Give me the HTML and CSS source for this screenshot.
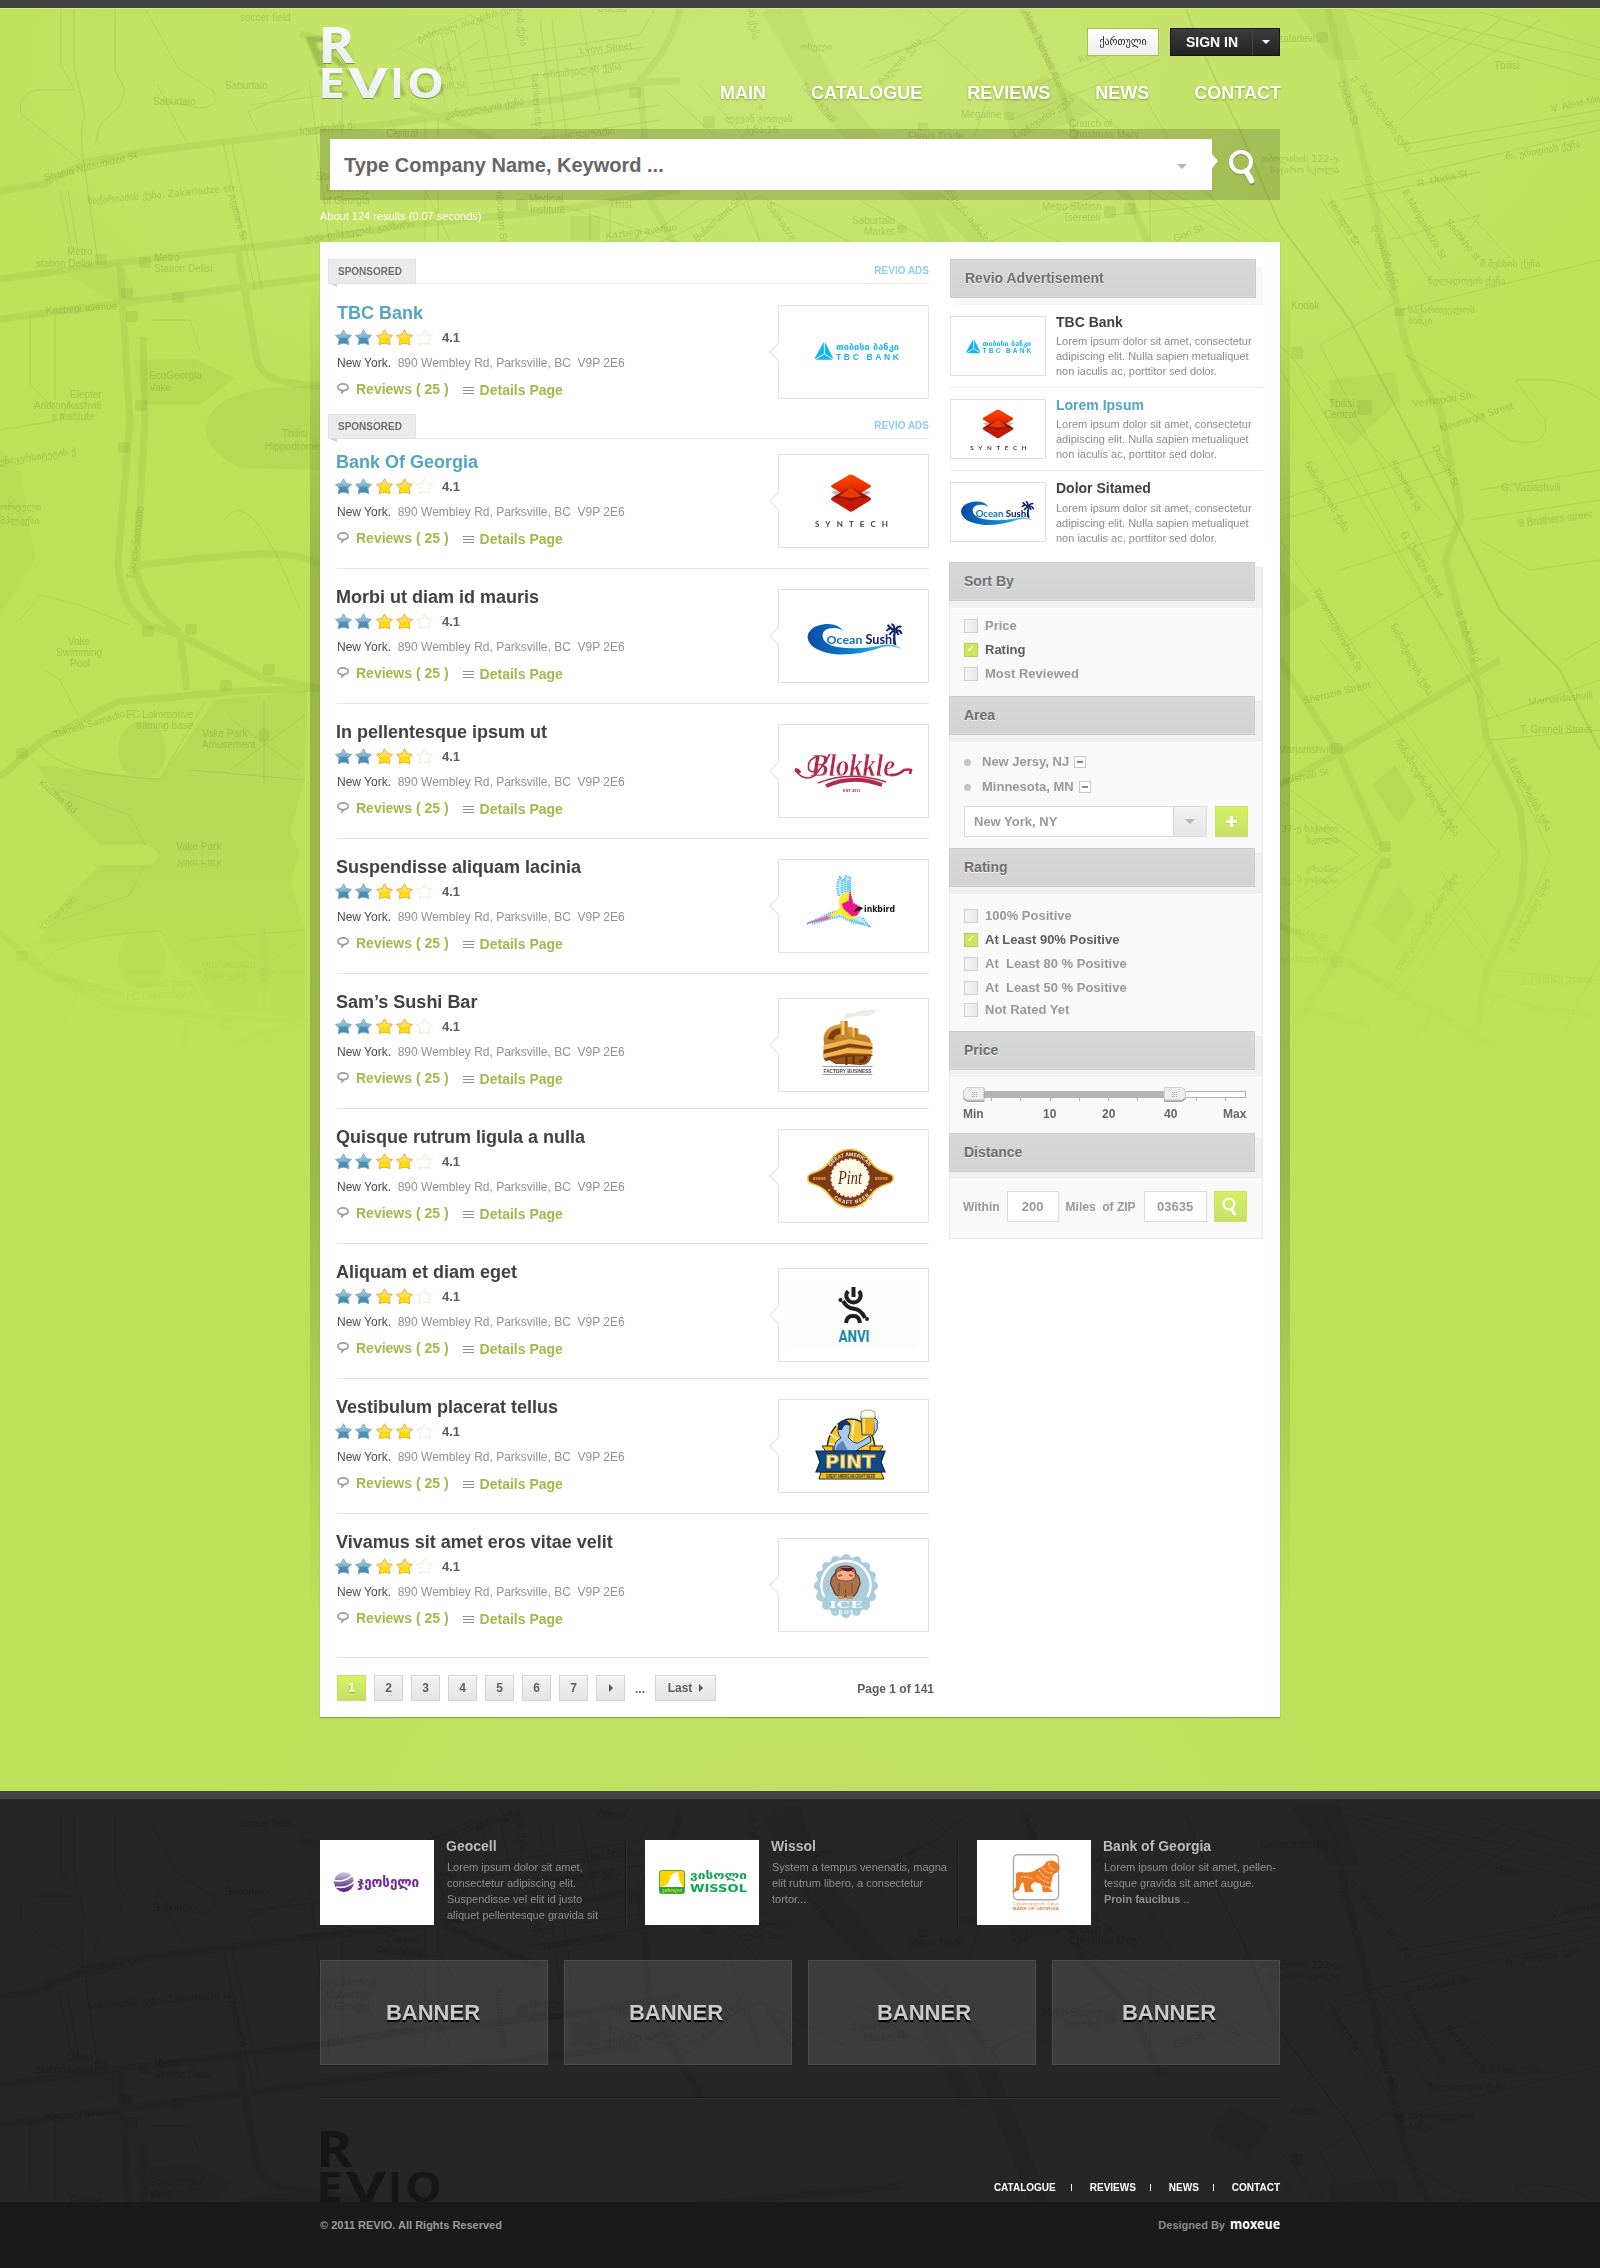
FILE: index.html
```html
<!DOCTYPE html>
<html lang="en">
<head>
<meta charset="utf-8">
<title>Revio</title>
<link rel="stylesheet" href="styles.css">
</head>
<body>
<svg class="defs" width="0" height="0" aria-hidden="true">
  <defs>
    <linearGradient id="gBlue" x1="0" y1="0" x2="0" y2="1"><stop offset="0" stop-color="#b9d3e2"/><stop offset=".5" stop-color="#7fb0cb"/><stop offset=".55" stop-color="#4c8fb5"/><stop offset="1" stop-color="#4488ad"/></linearGradient>
    <linearGradient id="gGold" x1="0" y1="0" x2="0" y2="1"><stop offset="0" stop-color="#ffe873"/><stop offset=".5" stop-color="#ffe14e"/><stop offset=".6" stop-color="#ffd800"/><stop offset="1" stop-color="#fff200"/></linearGradient>
    <linearGradient id="gLogo" x1="0" y1="0" x2="0" y2="1"><stop offset="0" stop-color="#ffffff"/><stop offset="1" stop-color="#e3e9ef"/></linearGradient>
    <linearGradient id="gRed" x1="0" y1="0" x2="0" y2="1"><stop offset="0" stop-color="#ff4a00"/><stop offset="1" stop-color="#d81500"/></linearGradient>
    <linearGradient id="gWave" x1="0" y1="0" x2="1" y2="0"><stop offset="0" stop-color="#0b4aa8"/><stop offset=".5" stop-color="#0a86cc"/><stop offset="1" stop-color="#5cc8ef"/></linearGradient>
    <linearGradient id="gFactory" x1="0" y1="0" x2="0" y2="1"><stop offset="0" stop-color="#e9a93c"/><stop offset="1" stop-color="#8a4a10"/></linearGradient>
    <linearGradient id="gGlobe" x1="0" y1="0" x2="0" y2="1"><stop offset="0" stop-color="#d8cfe0"/><stop offset=".45" stop-color="#8f72a8"/><stop offset="1" stop-color="#4b1b72"/></linearGradient>
    <linearGradient id="gFade" x1="0" y1="0" x2="0" y2="1"><stop offset="0" stop-color="#fff" stop-opacity=".85"/><stop offset="1" stop-color="#fff" stop-opacity="0"/></linearGradient>
    <mask id="mirrorFade" maskUnits="userSpaceOnUse" x="0" y="855" width="1600" height="240"><rect x="0" y="855" width="1600" height="200" fill="url(#gFade)"/></mask>
    <clipPath id="mapClip"><rect x="0" y="0" width="1600" height="855"/></clipPath>
    <clipPath id="mirrorClip"><rect x="0" y="620" width="1600" height="235"/></clipPath>

    <path id="starShape" d="M8.5 .8 L11 5.6 L16.4 6.4 L12.8 10 L13.8 15.8 Q11 14.2 8.5 14.2 Q6 14.2 3.2 15.8 L4.2 10 L.6 6.4 L6 5.6 Z" stroke-linejoin="round"/>
    <symbol id="stars" overflow="visible">
      <use href="#starShape" fill="url(#gBlue)" stroke="#79a9c5"/>
      <use href="#starShape" x="20" fill="url(#gBlue)" stroke="#79a9c5"/>
      <use href="#starShape" x="41" fill="url(#gGold)" stroke="#f0a838"/>
      <use href="#starShape" x="61" fill="url(#gGold)" stroke="#f0a838"/>
      <use href="#starShape" x="81" fill="#fdfdfb" stroke="#e6e4de" stroke-dasharray="2 .6"/>
    </symbol>
    <symbol id="bubble" overflow="visible"><path d="M6 .9C3 .9 .9 2.300 .9 4.200S2.800 7.400 5.400 7.500L5 9.600L7.400 7.400C9.600 7.100 11.200 5.800 11.200 4.200C11.200 2.300 9 .9 6 .9Z" fill="none" stroke="#9b9b9b" stroke-width="1.600"/></symbol>
    <symbol id="lines" overflow="visible"><path d="M0 .5H11M0 3.500H11M0 6.500H11" stroke="#8f8f8f" fill="none"/></symbol>

    <g id="map" clip-path="url(#mapClip)" fill="none" stroke="currentColor">
      <g stroke-width="7" opacity=".07" stroke-linejoin="round">
        <path d="M0 191L43 184L87 162L150 151L320 130L380 125L470 112L560 99L650 82L680 81"/>
        <path d="M0 279L117 263L320 239L400 226L560 210L680 190"/>
        <path d="M0 319L213 291L320 277L640 240"/>
        <path d="M120 263L130 421L118 561Q120 610 150 626L180 635L260 677L320 688L960 700"/>
        <path d="M237 246L257 360Q262 384 320 386L470 420L900 380"/>
        <path d="M0 777L43 740L117 702L240 691L320 688"/>
        <path d="M180 635L187 690M143 337L145 420L136 570Q145 610 180 632"/>
        <path d="M134 566Q180 560 240 555T320 565"/>
        <path d="M300 34L345 45Q352 55 350 65M410 106L450 122L540 160"/>
        <path d="M680 8Q670 50 640 80L650 200L700 290"/>
        <path d="M1022 8L1058 80L1080 150L1130 200L1160 270"/>
        <path d="M1328 8L1380 230L1400 320Q1410 370 1440 410L1461 517L1445 560L1475 670L1487 740L1520 810L1525 855"/>
        <path d="M1280 660L1340 755L1380 845M1280 785L1340 752L1500 660"/>
      </g>
      <g stroke-width="18" opacity=".05"><path d="M790 0Q810 80 880 150L970 230Q1000 290 1040 400L1120 560L1260 640"/><path d="M770 8L830 110L920 200L970 300"/></g>
      <g stroke="none" fill="currentColor" opacity=".065">
        <path d="M270 388L330 384V470L240 468Q204 450 206 425Q212 395 270 388Z"/>
        <path d="M37 765L160 779L215 700L307 691L305 779L290 830L300 855H160L150 845H100L65 810Z"/>
        <ellipse cx="142" cy="750" rx="24" ry="29"/><path d="M70 275L120 262L140 300H110Z" opacity=".4"/>
        <path d="M1000 96L1045 76L1100 110L1050 130H1010ZM1290 0H1340L1360 60H1330Z"/>
        <path d="M1330 380L1395 372L1400 400L1372 425L1350 447L1330 425ZM1372 785L1395 765L1416 800L1398 824ZM1280 570L1310 600L1285 617Z"/>
        <path d="M133 360L195 359L235 378L200 405L145 405Z" opacity=".8"/><path d="M0 450L20 470L35 560L0 615Z" opacity=".6"/>
        <path d="M570 216H600V240H570ZM1230 300L1270 320L1250 350L1210 330Z"/>
      </g>
      <g stroke-width="1" opacity=".12">
        <path d="M61 8V65L75 90H38Q15 95 22 115L80 160M74 8V65L85 115Q80 125 82 150L98 263M115 8V70L125 90L120 105L100 125L95 145"/>
        <path d="M145 8L178 68L212 90Q222 106 200 108L160 100M157 84L185 140M223 143L255 290M232 143L262 290M60 190L72 250M68 190L78 250"/>
        <path d="M250 105L320 96M258 132L248 112L300 90M152 320H190L200 350M30 315V385L65 420M55 315V400M0 430L60 420L70 400"/>
        <path d="M20 620L40 595L80 605L130 625M45 670L60 680L78 715M225 520Q250 480 300 610"/>
        <path d="M40 745Q60 775 160 779L205 702M60 790L130 815L145 845M190 770L305 780M264 700V784M230 718L300 770M305 715L230 770"/>
        <path d="M395 50L470 15L500 30M400 48L440 68L480 40M430 40L445 100M442 36L457 98M454 30L469 95M480 14L495 90M500 12L515 88M540 20L560 180M552 20L572 180M580 12L600 110"/>
        <path d="M470 60L640 35M475 72L645 47M480 84L650 58M465 96L540 85M530 125L660 105M530 140L660 120M390 120L450 240M400 150H440L460 180"/>
        <path d="M640 35L655 8M665 90L730 150L760 240M700 85L780 180M310 85L330 250M342 100V240M425 118V240M438 118V240"/>
        <path d="M560 205L700 250M590 210V242M610 208V242M720 150L760 242M640 242L700 200M660 242L760 196L850 242"/>
        <path d="M925 8L945 25L970 8M930 40L950 22M870 60L935 40L990 90L960 180M860 70L945 30M1000 100L1150 40M1010 120L1160 60M1060 130L1240 230M1080 100L1270 242M1100 60L1130 100"/>
        <path d="M1130 70L1180 160L1240 230M990 242L1130 180L1240 242M1110 215L1215 205M1150 242V180M1010 218L1060 242M860 200L930 242"/>
        <path d="M1186 8Q1200 50 1240 130L1280 225L1350 320L1460 530L1500 610L1560 670L1600 750" stroke-width="2"/>
        <path d="M1345 8L1600 80M1350 8L1440 80L1400 120M1370 8L1600 60M1380 60L1440 30M1395 75L1470 25M1410 90L1500 20M1425 100L1540 20M1400 145L1600 110M1405 155L1600 120M1480 12L1600 48"/>
        <path d="M1345 190L1600 130M1342 200L1480 172M1320 198L1380 290M1330 198L1395 300M1360 180L1430 280M1370 175L1440 270M1420 160L1510 258M1390 240L1480 215L1470 228M1400 310L1600 260M1320 345L1400 300"/>
        <path d="M1405 355L1480 400M1440 390L1510 440Q1550 450 1545 420L1515 380Q1570 375 1600 400M1480 490L1600 470M1470 520L1600 500M1480 540L1530 570L1600 560"/>
        <path d="M1280 345L1440 520M1280 370L1500 720M1295 360L1480 700M1320 345L1430 560M1280 500L1440 450M1280 520L1450 470M1340 570L1450 535M1350 640L1440 585M1280 540L1460 800M1320 640L1500 855"/>
        <path d="M1485 720L1600 680M1490 740L1600 730M1430 820L1485 750M1440 840L1495 755M1500 745L1540 830L1550 855M1280 800L1360 855M1290 790L1380 855M1565 660L1600 640"/>
      </g>
      <g stroke="none" fill="currentColor" class="map-labels">
        <g opacity=".22">
          <text x="225" y="89">Saburtalo</text><text x="153" y="105">Saburtalo</text><text x="240" y="21">soccer field</text>
          <text transform="translate(45 181) rotate(-14)">Shalva Nutsubidze St</text><text transform="translate(88 204) rotate(-5)" class="ka">ზაქარიაძის ქუჩა. Zakariadze str.</text>
          <text transform="translate(228 195) rotate(74)">Asatiani St</text><text x="67" y="255">Metro</text><text x="36" y="267">station Delisi</text><text x="154" y="261">Metro</text><text x="154" y="272">Station Delisi</text>
          <text transform="translate(46 314) rotate(-4)">Kazbegi avenue</text><text x="149" y="379">EcoGeorgia</text><text x="149" y="391">Vake</text>
          <text x="70" y="398">Elepter</text><text x="34" y="409">Andronikashvili</text><text x="52" y="420">s Institute</text><text x="282" y="437">Tbilisi</text><text x="265" y="450">Hippodrome</text>
          <text transform="translate(134 580) rotate(-82)">Tskneti-Samadlo</text><text x="68" y="645">Vake</text><text x="56" y="656">Swimming</text><text x="70" y="667">Pool</text>
          <text transform="translate(55 738) rotate(-17)">Tskneti-Samadlo</text><text x="126" y="718">FC Lokomotive</text><text x="136" y="729">training base</text><text x="202" y="737">Vake Park</text><text x="202" y="748">Amusement</text>
          <text transform="translate(38 784) rotate(40)">Kustba Rd</text><text x="176" y="850">Vake Park</text><text x="0" y="510" class="ka">ორტული</text><text x="0" y="524" class="ka">მპლექსი</text><text transform="translate(0 465) rotate(-8)" class="ka">უნივერსიტეტის ქ</text>
          <text transform="translate(418 42) rotate(-18)" class="ka">გაბრიელ ისაკაძის ქუჩა</text><text transform="translate(580 54) rotate(-6)">Lvovi Street</text><text x="597" y="12">Odesa</text>
          <text transform="translate(543 79) rotate(-7)" class="ka">ონიაშვილის ქუჩა</text><text transform="translate(405 78) rotate(-8)" class="ka">ვილის ქუჩა</text><text transform="translate(408 93) rotate(-5)">Grand mill St</text>
          <text transform="translate(531 72) rotate(85)">Tashkenti str.</text><text transform="translate(446 118) rotate(-10)" class="ka">კანდელაკის ქუჩა</text><text transform="translate(300 134) rotate(-7)" class="ka">ნუცუბიძის ქ.</text>
          <text x="386" y="137">Central</text><text x="376" y="149">Republican</text><text transform="translate(542 144) rotate(-8)">Tskneti-Samadlo</text><text x="316" y="180">State Medical</text><text x="326" y="192">University</text><text x="323" y="204">of Georgia</text>
          <text x="529" y="202">Medical</text><text x="530" y="213">Institute</text><text transform="translate(495 182) rotate(85)">Ambrolauri St</text><text transform="translate(305 242) rotate(-8)" class="ka">ვაჟა-ფშაველას გამზირი</text><text x="609" y="208">Tfilisi</text>
          <text transform="translate(606 239) rotate(-7)">Kazbegi avenue</text><text x="725" y="122" class="ka">ლევან გოთუას</text><text x="744" y="133" class="ka">ქუჩა 16</text><text transform="translate(516 8) rotate(83)" class="ka">ტის ქუჩა</text><text transform="translate(748 8) rotate(82)" class="ka">ის ქუჩა</text>
          <text transform="translate(697 242) rotate(-42)">Bulachauri St</text><text transform="translate(766 205) rotate(55)">Saakadze</text>
          <text x="800" y="50" class="ka">ოსელი</text><text transform="translate(882 86) rotate(-48)" class="ka">რაულის ქუჩა</text><text transform="translate(1023 12) rotate(66)">Akaki Tsereteli Ave</text><text transform="translate(800 85) rotate(50)">Tsiteli Khidi</text>
          <text x="961" y="118">Megaline</text><text x="1069" y="127">Church of</text><text x="1069" y="138">Christmas Mary</text><text x="908" y="140">Eliava Trade</text><text transform="translate(1015 140) rotate(-33)" class="ka">ჭავჭავაძის ქუჩა</text>
          <text x="1042" y="210">Metro Station</text><text x="1063" y="221">Tsereteli</text><text x="852" y="224">Saburtalo</text><text x="864" y="235">Market</text><text transform="translate(940 185) rotate(52)" class="ka">მარჯვენა სანაპირო</text><text transform="translate(1175 242) rotate(-22)">Gori St</text><text transform="translate(1080 63) rotate(-22)">Kedia</text>
          <text x="1261" y="162" class="ka">თბილისის 122-ე</text><text x="1270" y="173" class="ka">საჯარო სკოლა</text><text x="1260" y="42">Nadzaladevi</text>
          <text transform="translate(1338 82) rotate(72)">Dadiani St</text><text transform="translate(1352 78) rotate(54)" class="ka">ე. მანჯგალაძის ქუჩა</text><text x="1494" y="69">Tbilisi</text><text transform="translate(1552 112) rotate(-12)">V. Alexi-Meskhi</text>
          <text transform="translate(1506 160) rotate(-10)" class="ka">რ. ურიდიას ქუჩა</text><text transform="translate(1418 187) rotate(-12)">R. Uridia St</text><text transform="translate(1328 203) rotate(58)">Rkinigza St</text><text transform="translate(1402 192) rotate(60)">E Manjgaladze St</text><text transform="translate(1445 222) rotate(52)">Sachkho st</text>
          <text transform="translate(1372 226) rotate(72)" class="ka">დადიანის ქუჩა</text><text x="1480" y="267" class="ka">მ.მესხის ქუჩა</text><text x="1428" y="284" class="ka">ნულადოვის ქუჩა</text><text x="1291" y="309">Kodak</text><text x="1408" y="313" class="ka">საქართველოს</text><text x="1408" y="324" class="ka">ბანკი</text>
          <text transform="translate(1413 407) rotate(-8)">Veshapuri Str.</text><text transform="translate(1441 432) rotate(-18)">Meunargia Street</text><text x="1329" y="407">Tbilisi</text><text x="1324" y="418">Central</text><text transform="translate(1432 447) rotate(62)">Dadiani St</text><text x="1501" y="491">G. Vaziashvili</text>
          <text transform="translate(1519 527) rotate(-7)">9 Brothers street</text><text transform="translate(1390 462) rotate(62)">Firosmani str</text><text transform="translate(1400 534) rotate(60)">G. Delidze street</text><text transform="translate(1304 464) rotate(60)" class="ka">ნინოშვილის ქუჩა</text>
          <text transform="translate(1313 590) rotate(62)">Tsinamdzgvrishvili St</text><text transform="translate(1304 704) rotate(-14)">Sherozia Street</text><text transform="translate(1529 705) rotate(-6)">Mamardashvili</text><text x="1520" y="733">T. Graneli Street</text><text transform="translate(1390 626) rotate(62)" class="ka">ნინოშვილის ქუჩა</text>
          <text x="1278" y="753">Marjanishvili</text><text transform="translate(1280 785) rotate(-12)">janishvili St</text><text transform="translate(1395 742) rotate(58)" class="ka">წინამძღვრიშვილის ქუჩა</text><text transform="translate(1508 760) rotate(62)" class="ka">წ გოგირიძის ქუჩა</text><text x="1281" y="832" class="ka">37-ე საჯარო</text><text x="1306" y="843" class="ka">სკოლა</text><text transform="translate(1455 612) rotate(68)" class="ka">მ. ჩიტაიას ქ</text>
        </g>
        <g opacity=".1">
          <rect x="95" y="254" width="12" height="11" rx="3"/><rect x="139" y="257" width="12" height="11" rx="3"/><rect x="121" y="288" width="12" height="11" rx="3"/><rect x="126" y="311" width="12" height="11" rx="3"/><rect x="172" y="292" width="12" height="11" rx="3"/><rect x="135" y="400" width="12" height="11" rx="3"/><rect x="118" y="442" width="12" height="11" rx="3"/><rect x="142" y="626" width="12" height="11" rx="3"/><rect x="185" y="624" width="12" height="11" rx="3"/><rect x="263" y="664" width="12" height="11" rx="3"/><rect x="220" y="680" width="12" height="11" rx="3"/><rect x="16" y="748" width="12" height="11" rx="3"/>
          <rect x="629" y="87" width="12" height="11" rx="3"/><rect x="703" y="116" width="12" height="12" rx="3"/><rect x="516" y="199" width="12" height="12" rx="3"/><rect x="1104" y="206" width="12" height="12" rx="3"/><rect x="1124" y="203" width="12" height="12" rx="3"/><rect x="1004" y="112" width="10" height="8" rx="1"/><rect x="918" y="123" width="10" height="8" rx="1"/><rect x="897" y="225" width="10" height="8" rx="1"/>
          <rect x="1316" y="32" width="12" height="11" rx="3"/><rect x="1291" y="347" width="12" height="12" rx="3"/><rect x="1357" y="400" width="15" height="15" rx="3"/><rect x="1331" y="743" width="12" height="11" rx="3"/><rect x="1379" y="841" width="12" height="11" rx="3"/><rect x="1395" y="308" width="10" height="8"/><rect x="759" y="105" width="4" height="4"/><ellipse cx="264" cy="735" rx="6" ry="7"/>
        </g>
      </g>
    </g>

    <g id="wordmark" class="wordmark">
      <text x="-4" y="36" font-size="50" textLength="37" lengthAdjust="spacingAndGlyphs">R</text>
      <text x="-4" y="71" font-size="42" textLength="27" lengthAdjust="spacingAndGlyphs">E</text>
      <text x="26" y="71" font-size="42" textLength="40" lengthAdjust="spacingAndGlyphs">V</text>
      <text x="68" y="71" font-size="42">I</text>
      <text x="85" y="71" font-size="42" textLength="37" lengthAdjust="spacingAndGlyphs">O</text>
    </g>

    <g id="logoTbc" fill="#17b4ef">
      <path d="M45.500 37.500Q46.500 36.500 47.500 38L55 53Q55.200 55 53 54.800H38Q36 54.500 37 52.500Z"/><path d="M46.400 37V49L37 54.500M46.400 49L55.500 54.500" stroke="#fff" fill="none"/>
      <text x="58" y="45" class="ka" font-size="9" font-weight="700" textLength="63" lengthAdjust="spacingAndGlyphs">თიბისი ბანკი</text>
      <text x="58" y="54.500" font-size="8.500" font-weight="700" textLength="63">TBC BANK</text>
    </g>
    <g id="logoSyntech">
      <path d="M53 38L60 36.500H87L93 38L85 43H61Z" fill="#b9b9b9"/>
      <path d="M54 43.500L73 34L92 43.500Q94 45 92 46.500L75 57Q73 58.300 71 57L54 46.500Q52 45 54 43.500Z" fill="#c21a04"/>
      <path d="M54 31L71 21Q73 19.800 75 21L92 31Q94 32 92 33.500L75 43.500Q73 44.500 71 43.500L54 33.500Q52 32 54 31Z" fill="url(#gRed)"/>
      <path d="M54 43.500L73 33L92 43.500L80 44L73 47L66 44Z" fill="#8d1404"/><path d="M61 42L73 33L84 42L73 44Z" fill="#e83a05"/>
      <text x="37" y="73" font-size="8" font-weight="700" fill="#444" textLength="73" font-family="Lato, sans-serif">SYNTECH</text>
    </g>
    <g id="logoOcean">
      <path d="M66 42Q60 34 48 35Q31 37 30 48Q31 62 60 65.500Q84 66 105 58Q115 56 124 60Q116 53 101 57Q80 61 60 58Q45 55 45 46Q46 39 56 39Q62 39 66 42Z" fill="url(#gWave)"/>
      <text x="49" y="55" font-size="12" font-weight="700" fill="#1373bd" textLength="36" lengthAdjust="spacingAndGlyphs" font-family="Lato, sans-serif">Ocean</text>
      <text x="88" y="55" font-size="12.500" font-weight="700" fill="#0c2470" textLength="30" lengthAdjust="spacingAndGlyphs" font-family="Lato, sans-serif">Sushi</text>
      <path d="M118 56Q116 50 117.500 42M117 42Q113 37 109 42M117 42Q112 38 110 36M117 41Q117 36 114 35M118 41Q121 36 124 38M118 42Q123 40 124 45M117.500 42Q114 42 112 46M118 42Q120 43 121 46" fill="none" stroke="#0c2470" stroke-width="2"/>
    </g>
  </defs>
</svg>

<div class="top-line"></div>
<main class="page">
  <svg class="map-layer green" width="1600" height="1100" aria-hidden="true"><use href="#map"/><g mask="url(#mirrorFade)"><g transform="matrix(1 0 0 -1 0 1710)"><g clip-path="url(#mirrorClip)"><use href="#map"/></g></g></g></svg>
  <div class="wrap">
    <header class="header">
      <svg class="brand" width="124" height="76" role="img" aria-label="Revio">
        <g opacity=".28" fill="#4d6a10" class="soft"><use href="#wordmark" transform="translate(-16 10) skewX(22) scale(1 .85)"/></g>
        <g fill="#7f9a32"><use href="#wordmark" transform="translate(2 2)"/></g><g fill="url(#gLogo)"><use href="#wordmark" transform="translate(2 1)"/></g>
      </svg>
      <div class="header-side">
        <div class="account"><a class="lang ka">ქართული</a><a class="signin"><span>SIGN IN</span><i class="signin-caret"></i></a></div>
        <nav class="nav"><a>MAIN</a><a>CATALOGUE</a><a>REVIEWS</a><a>NEWS</a><a>CONTACT</a></nav>
      </div>
    </header>
    <div class="search">
      <div class="search-input"><span>Type Company Name, Keyword ...</span><i class="caret"></i></div>
      <svg class="search-icon" width="30" height="38"><g fill="none" stroke="#7f9440" transform="translate(0 1)"><circle cx="13" cy="13" r="10" stroke-width="4"/><path d="M17 22L24 33" stroke-width="5" stroke-linecap="round"/></g><g fill="none" stroke="#fff"><circle cx="13" cy="13" r="10" stroke-width="4"/><path d="M18 22L23.500 31.500" stroke-width="5.500" stroke-linecap="round"/></g></svg>
    </div>
    <p class="count">About 124 results (0.07 seconds)</p>

    <div class="panel">
      <section class="results">
        <div class="ribbon"><b>SPONSORED</b><span>REVIO ADS</span></div>
        <article class="entry ad first">
          <div class="info"><h2>TBC Bank</h2><div class="rate"><svg width="98" height="17"><use href="#stars"/></svg><b>4.1</b></div><p class="addr"><em>New York.</em>&nbsp; 890 Wembley Rd, Parksville, BC&nbsp; V9P 2E6</p><p class="links"><svg width="12" height="11"><use href="#bubble"/></svg><a>Reviews ( 25 )</a><svg class="ln" width="11" height="7"><use href="#lines"/></svg><a class="det">Details Page</a></p></div>
          <div class="thumb"><svg viewBox="1 1 149 92"><use href="#logoTbc"/></svg></div>
        </article>
        <div class="ribbon"><b>SPONSORED</b><span>REVIO ADS</span></div>
        <article class="entry ad second">
          <div class="info"><h2>Bank Of Georgia</h2><div class="rate"><svg width="98" height="17"><use href="#stars"/></svg><b>4.1</b></div><p class="addr"><em>New York.</em>&nbsp; 890 Wembley Rd, Parksville, BC&nbsp; V9P 2E6</p><p class="links"><svg width="12" height="11"><use href="#bubble"/></svg><a>Reviews ( 25 )</a><svg class="ln" width="11" height="7"><use href="#lines"/></svg><a class="det">Details Page</a></p></div>
          <div class="thumb"><svg viewBox="1 1 149 92"><use href="#logoSyntech"/></svg></div>
        </article>
        <article class="entry">
          <div class="info"><h2>Morbi ut diam id mauris</h2><div class="rate"><svg width="98" height="17"><use href="#stars"/></svg><b>4.1</b></div><p class="addr"><em>New York.</em>&nbsp; 890 Wembley Rd, Parksville, BC&nbsp; V9P 2E6</p><p class="links"><svg width="12" height="11"><use href="#bubble"/></svg><a>Reviews ( 25 )</a><svg class="ln" width="11" height="7"><use href="#lines"/></svg><a class="det">Details Page</a></p></div>
          <div class="thumb"><svg viewBox="1.500 1 149 92"><use href="#logoOcean"/></svg></div>
        </article>
        <article class="entry">
          <div class="info"><h2>In pellentesque ipsum ut</h2><div class="rate"><svg width="98" height="17"><use href="#stars"/></svg><b>4.1</b></div><p class="addr"><em>New York.</em>&nbsp; 890 Wembley Rd, Parksville, BC&nbsp; V9P 2E6</p><p class="links"><svg width="12" height="11"><use href="#bubble"/></svg><a>Reviews ( 25 )</a><svg class="ln" width="11" height="7"><use href="#lines"/></svg><a class="det">Details Page</a></p></div>
          <div class="thumb"><svg viewBox="1 1 149 92" fill="#b3284f">
            <text x="33" y="52" font-size="32" font-style="italic" font-weight="700" font-family="Liberation Serif, serif" textLength="84" lengthAdjust="spacingAndGlyphs" stroke="#fff" stroke-width=".5">Blokkle</text>
            <g fill="none" stroke="#b3284f"><path d="M17 46Q26 58 36 52Q44 44 52 30M40 32Q28 36 31 46Q34 50 40 45" stroke-width="1.600"/><path d="M17 46Q20 45 22 49" stroke-width="3"/><path d="M112 51Q120 52 126 46Q130 45 133 46L132 50" stroke-width="2.500"/><path d="M40 59Q72 46 108 58" stroke-width="1.500"/><path d="M48 62Q75 50 104 61" stroke-width="4"/></g>
            <text x="65" y="68" font-size="4" font-weight="700">EST 2011</text></svg></div>
        </article>
        <article class="entry">
          <div class="info"><h2>Suspendisse aliquam lacinia</h2><div class="rate"><svg width="98" height="17"><use href="#stars"/></svg><b>4.1</b></div><p class="addr"><em>New York.</em>&nbsp; 890 Wembley Rd, Parksville, BC&nbsp; V9P 2E6</p><p class="links"><svg width="12" height="11"><use href="#bubble"/></svg><a>Reviews ( 25 )</a><svg class="ln" width="11" height="7"><use href="#lines"/></svg><a class="det">Details Page</a></p></div>
          <div class="thumb"><svg viewBox="1 1 149 92">
            <path d="M61 37Q57 27 62 18L65 22L68 17L73 19L74 34Z" fill="#bfe8f8"/><path d="M61 37Q57 27 62 18L65 22L68 17L73 19M64 34V22M67 33V20M70 33V21M72 34V20" fill="none" stroke="#4fbfeb" stroke-width="2" stroke-dasharray="1.300 1"/>
            <path d="M29 65L52 54L70 50L84 58L91 67L74 63L62 57L42 63Z" fill="#c5ebf8"/><path d="M29 65L52 54L70 50M34 65L62 57L74 63L91 67L84 58M72 60L86 65" fill="none" stroke="#4fbfeb" stroke-width="2" stroke-dasharray="1.300 1"/>
            <path d="M30 64L56 55L50 60Z" fill="#ef5aa8" stroke="#ef5aa8" stroke-dasharray="1.300 .8"/><path d="M50 58L62 49L61 40L65 35L72 33V40L68 50L80 58L70 60L62 54Z" fill="#ffe92e" stroke="#ffe92e" stroke-dasharray="1.300 .8"/>
            <path d="M72 33L75 44L84 49L79 56L74 57L66 50L64 45L71 42Z" fill="#ec1390" stroke="#ec1390" stroke-dasharray="1.300 .8"/><path d="M76 53Q78 47 83 48L85 49.500L80 52Z" fill="#222"/>
            <text x="86" y="53" font-size="8.500" font-weight="700" fill="#111" textLength="31" font-family="DejaVu Sans, sans-serif" lengthAdjust="spacingAndGlyphs">inkbird</text></svg></div>
        </article>
        <article class="entry low">
          <div class="info"><h2>Sam’s Sushi Bar</h2><div class="rate"><svg width="98" height="17"><use href="#stars"/></svg><b>4.1</b></div><p class="addr"><em>New York.</em>&nbsp; 890 Wembley Rd, Parksville, BC&nbsp; V9P 2E6</p><p class="links"><svg width="12" height="11"><use href="#bubble"/></svg><a>Reviews ( 25 )</a><svg class="ln" width="11" height="7"><use href="#lines"/></svg><a class="det">Details Page</a></p></div>
          <div class="thumb"><svg viewBox="1.500 1 149 92">
            <path d="M66 22Q66 14 76 15Q88 10 99 12Q96 19 84 18Q74 18 67 22Z" fill="#f0ece0"/>
            <path d="M46 40Q47 28 63 26V23H70V29H75V31H81V36L88 37Q94 40 94 47V58Q92 68 82 67L70 66H58Q46 60 47 50Z" fill="url(#gFactory)"/><path d="M64 23H70V37H64ZM75 30H80V39H75Z" fill="#c67b20"/><path d="M64 23H67V37H64ZM75 30H77V39H75Z" fill="#f4cf78"/>
            <path d="M50 41Q53 30 63 30V36Q57 36 56 42Z" fill="#7a3f0c"/>
            <path d="M46 47L72 41L95 45V49L72 45L46 52ZM45 56L70 50L95 52V56L70 55L46 60Z" fill="#f0b452"/><path d="M46 52L72 46L95 49V51L72 49L46 56ZM46 60L70 56L95 57V58L70 59L48 63Z" fill="#7a3f0c"/><path d="M69 58V67M76 58V66" stroke="#5d2d08" stroke-width="2" fill="none"/><path d="M88 58Q88 64 82 63" stroke="#5d2d08" stroke-width="3" fill="none"/>
            <path d="M45 68.500H95M45 76.500H95" stroke="#777" stroke-width=".7"/><text x="46" y="75" font-size="6" font-weight="700" fill="#444" textLength="48" lengthAdjust="spacingAndGlyphs">FACTORY BUSINESS</text></svg></div>
        </article>
        <article class="entry">
          <div class="info"><h2>Quisque rutrum ligula a nulla</h2><div class="rate"><svg width="98" height="17"><use href="#stars"/></svg><b>4.1</b></div><p class="addr"><em>New York.</em>&nbsp; 890 Wembley Rd, Parksville, BC&nbsp; V9P 2E6</p><p class="links"><svg width="12" height="11"><use href="#bubble"/></svg><a>Reviews ( 25 )</a><svg class="ln" width="11" height="7"><use href="#lines"/></svg><a class="det">Details Page</a></p></div>
          <div class="thumb"><svg viewBox="1 0 149 92">
            <path d="M30 48Q29 45 35 43Q46 40 52 31Q60 19.500 72 19.500Q84 19.500 92 31Q98 40 109 43Q116 45 115 48Q116 52 109 54Q98 57 92 66Q84 77.500 72 77.500Q60 77.500 52 66Q46 57 35 54Q29 52 30 48Z" fill="#7f3b18" stroke="#f2c13c" stroke-width="1.600"/>
            <circle cx="72" cy="48" r="18.500" fill="#fffbe8" stroke="#fffbe8" stroke-width="2" stroke-dasharray="3 1.500"/>
            <path id="arcT" d="M50.800 56A22.500 22.500 0 1 1 93.200 56" fill="none"/><path id="arcB" d="M46 48A26 26 0 0 0 98 48" fill="none"/>
            <text font-size="5" font-weight="700" fill="#fff3d0"><textPath href="#arcT" startOffset="20">GREAT AMERICAN</textPath></text><text font-size="5" font-weight="700" fill="#fff3d0" letter-spacing=".8"><textPath href="#arcB" startOffset="23">CRAFT BEER</textPath></text>
            <text x="60" y="54" font-size="18" font-style="italic" fill="#5d2a10" font-family="Liberation Serif, serif" textLength="24" lengthAdjust="spacingAndGlyphs">Pint</text>
            <path d="M35 48.500H48M97 48.500H110" stroke="#d98a2c" stroke-width="3" stroke-dasharray="2 .6"/><circle cx="51" cy="60" r="1" fill="#f2c13c"/><circle cx="93" cy="60" r="1" fill="#f2c13c"/></svg></div>
        </article>
        <article class="entry low">
          <div class="info"><h2>Aliquam et diam eget</h2><div class="rate"><svg width="98" height="17"><use href="#stars"/></svg><b>4.1</b></div><p class="addr"><em>New York.</em>&nbsp; 890 Wembley Rd, Parksville, BC&nbsp; V9P 2E6</p><p class="links"><svg width="12" height="11"><use href="#bubble"/></svg><a>Reviews ( 25 )</a><svg class="ln" width="11" height="7"><use href="#lines"/></svg><a class="det">Details Page</a></p></div>
          <div class="thumb"><svg viewBox="1 1 149 92">
            <rect x="12" y="12" width="127" height="68" fill="#fdfdfd"/>
            <g fill="none" stroke="#1f1f1f" stroke-width="4"><path d="M75.500 19V29"/><path d="M70 23A7.200 7 0 1 0 81 23"/><path d="M65 33Q69 40 75 40.500Q83 41 87 50"/><path d="M68 55Q69 47.500 75 48Q81 47.500 82 55"/></g><circle cx="62.500" cy="32" r="2" fill="#1f1f1f"/><circle cx="89" cy="51" r="2" fill="#1f1f1f"/>
            <text x="60.500" y="73.500" font-family="Roboto, sans-serif" font-weight="700" font-size="16" fill="#1287a8" textLength="31" lengthAdjust="spacingAndGlyphs">ANVI</text></svg></div>
        </article>
        <article class="entry">
          <div class="info"><h2>Vestibulum placerat tellus</h2><div class="rate"><svg width="98" height="17"><use href="#stars"/></svg><b>4.1</b></div><p class="addr"><em>New York.</em>&nbsp; 890 Wembley Rd, Parksville, BC&nbsp; V9P 2E6</p><p class="links"><svg width="12" height="11"><use href="#bubble"/></svg><a>Reviews ( 25 )</a><svg class="ln" width="11" height="7"><use href="#lines"/></svg><a class="det">Details Page</a></p></div>
          <div class="thumb"><svg viewBox="1 0 149 92">
            <path d="M49 51A24 32 0 0 1 97 51Z" fill="#f7c529" stroke="#2a2a1a" stroke-width="1.500"/><path d="M73 48L52 34M73 48L58 24M73 48L92 34M73 48L95 42M73 48L76 20M73 48L51 44" stroke="#fff2b0" stroke-width="2"/>
            <path d="M56 51Q56 41 63 38Q58 32 61 24Q67 17 72 24Q73 32 70 37Q76 44 80 43L92 36L93 42L82 48L78 51Z" fill="#a9c8ea" stroke="#1c3f77" stroke-width="1"/><path d="M60 30Q59 20 67 20Q73 22 72 26Q66 23 64 30Z" fill="#17325f"/><path d="M57 51Q59 43 65 41L70 51Z" fill="#5c83bf"/>
            <path d="M83 16H97L96 35H84Z" fill="#f2b21f" stroke="#31506f"/><path d="M83 12Q90 8 97 12V18H83Z" fill="#fffbe0" stroke="#6c8a8a" stroke-width=".7"/><path d="M86 19V33" stroke="#ffe78a" stroke-width="2"/><path d="M96 18Q101 20 99 24Q101 28 97 33" fill="#bcd6ee" stroke="#1c3f77"/>
            <path d="M44 46H55V53H49ZM92 46H105L101 53H92ZM43 72H103L106 79H41Z" fill="#f3c21f" stroke="#2a2a1a"/>
            <path d="M38 51H107L103 62L107 72H38L42 62Z" fill="#0f4a86" stroke="#12233f" stroke-width="1.200"/>
            <text x="47" y="68" font-size="17" font-weight="700" fill="#fff4c0" stroke="#d99a16" stroke-width=".8" font-family="DejaVu Sans, sans-serif" textLength="50" lengthAdjust="spacingAndGlyphs">PINT</text>
            <text x="48" y="77.500" font-size="5" font-weight="700" fill="#2a2a1a" textLength="49" lengthAdjust="spacingAndGlyphs">GREAT AMERICAN CRAFT BEER</text></svg></div>
        </article>
        <article class="entry low last">
          <div class="info"><h2>Vivamus sit amet eros vitae velit</h2><div class="rate"><svg width="98" height="17"><use href="#stars"/></svg><b>4.1</b></div><p class="addr"><em>New York.</em>&nbsp; 890 Wembley Rd, Parksville, BC&nbsp; V9P 2E6</p><p class="links"><svg width="12" height="11"><use href="#bubble"/></svg><a>Reviews ( 25 )</a><svg class="ln" width="11" height="7"><use href="#lines"/></svg><a class="det">Details Page</a></p></div>
          <div class="thumb"><svg viewBox="1 0 149 92">
            <circle cx="68" cy="47" r="29" fill="#a9cddb"/><circle cx="68" cy="47" r="27.500" fill="none" stroke="#a9cddb" stroke-width="9" stroke-dasharray="0 10.800" stroke-linecap="round"/>
            <path d="M46.500 58A24.500 24.500 0 1 1 89.500 58" fill="none" stroke="#fff" stroke-width="2.500"/>
            <path d="M57 35Q57 27 67.500 27Q78 27 78 35Q82 37 82 45L80 50Q78 57 73 58H63Q57 57 55 50L52.500 45Q53 37 57 35Z" fill="#a9734a" stroke="#6e2f2d" stroke-width="1.200"/><path d="M58 36Q58 31 67.500 31Q77 31 77.500 36Q77 42 67.500 42Q58 42 58 36Z" fill="#efb48c" stroke="#6e2f2d" stroke-width=".8"/><path d="M62 29H76Q72 34 67.500 32Q65 31 62 29Z" fill="#5a1630"/><path d="M61 44V55M74 44V55M67.500 50V58" stroke="#7d4a30" stroke-width="1"/><path d="M60 37L64 36M71 36L75 37" stroke="#d0542a" stroke-width="2"/><path d="M60 57H66V60H60ZM69 57H75V60H69Z" fill="#d98a5c"/>
            <text x="51" y="68.500" font-size="10" font-weight="700" fill="#fff" font-family="DejaVu Serif, serif" textLength="34" lengthAdjust="spacingAndGlyphs">ICE</text><text x="57" y="74.500" font-size="5" font-weight="700" fill="#fff" font-family="DejaVu Serif, serif" textLength="22">·BOY·</text></svg></div>
        </article>
        <div class="pager">
          <a class="on">1</a><a>2</a><a>3</a><a>4</a><a>5</a><a>6</a><a>7</a><a><i class="tri"></i></a><span class="dots">...</span><a class="wide">Last<i class="tri"></i></a><span class="pages">Page 1 of 141</span>
        </div>
      </section>

      <aside class="side">
        <h3 class="bar ads-bar">Revio Advertisement</h3>
        <div class="ads">
          <div class="promo"><div class="pic"><svg viewBox="17 8 122 75"><use href="#logoTbc"/></svg></div><div class="promo-text"><h4>TBC Bank</h4><p>Lorem ipsum dolor sit amet, consectetur<br>adipiscing elit. Nulla sapien metualiquet<br>non iaculis ac, porttitor sed dolor.</p></div></div>
          <div class="promo"><div class="pic"><svg viewBox="12 8 122 75"><use href="#logoSyntech"/></svg></div><div class="promo-text"><h4 class="blue">Lorem Ipsum</h4><p>Lorem ipsum dolor sit amet, consectetur<br>adipiscing elit. Nulla sapien metualiquet<br>non iaculis ac, porttitor sed dolor.</p></div></div>
          <div class="promo"><div class="pic"><svg viewBox="17 11 122 75"><use href="#logoOcean"/></svg></div><div class="promo-text"><h4>Dolor Sitamed</h4><p class="drop">Lorem ipsum dolor sit amet, consectetur<br>adipiscing elit. Nulla sapien metualiquet<br>non iaculis ac, porttitor sed dolor.</p></div></div>
        </div>
        <div class="filters">
          <section class="filter sort"><h3 class="bar">Sort By</h3>
            <ul class="checks"><li>Price</li><li class="on">Rating</li><li>Most Reviewed</li></ul></section>
          <section class="filter area"><h3 class="bar">Area</h3>
            <ul class="places"><li>New Jersy, NJ<i class="minus"></i></li><li>Minnesota, MN<i class="minus"></i></li></ul>
            <div class="adder"><div class="select"><span>New York, NY</span><b><i class="caret"></i></b></div><a class="green-btn plus"><svg width="11" height="12"><path d="M4 1.500H7V4.500H11V7.500H7V11.500H4V7.500H0V4.500H4Z" fill="#a9bd56"/><path d="M4 0H7V4H11V7H7V11H4V7H0V4H4Z" fill="#fff"/></svg></a></div></section>
          <section class="filter rating"><h3 class="bar">Rating</h3>
            <ul class="checks"><li>100% Positive</li><li class="on">At Least 90% Positive</li><li>At&nbsp; Least 80 % Positive</li><li>At&nbsp; Least 50 % Positive</li><li class="tight">Not Rated Yet</li></ul></section>
          <section class="filter price"><h3 class="bar">Price</h3>
            <svg class="slider" width="284" height="16"><rect x="20" y="4.500" width="262.500" height="6" fill="#fff" stroke="#b0b0b0"/><rect x="20" y="4" width="190" height="7" fill="#b4b4b4"/><path d="M28.500 11V14M57.500 11V14M87.500 11V14M116.500 11V14M145.500 11V14M174.500 11V14M233.500 11V14M262.500 11V14" stroke="#b4b4b4"/>
              <path d="M4 1H21V14.500H4L.8 12V4Z" fill="#999" stroke="#a5a5a5"/><path d="M4 .5H20.500V13H4L.8 10.500V3.500Z" fill="#ededed" stroke="#d2d2d2"/><path d="M201.500 1H219L222.300 4V12L219 14.500H201.500Z" fill="#999" stroke="#a5a5a5"/><path d="M201.500 .5H219L222.200 3.500V10.500L219 13H201.500Z" fill="#ededed" stroke="#d2d2d2"/><path d="M9 5.500H15M9 7.500H15M9 9.500H15M209 5.500H215M209 7.500H215M209 9.500H215" stroke="#aaa" stroke-dasharray="1 1"/></svg>
            <div class="scale"><span>Min</span><span>10</span><span>20</span><span>40</span><span>Max</span></div></section>
          <section class="filter distance"><h3 class="bar">Distance</h3>
            <div class="zip"><span>Within</span><b class="field w1">200</b><span class="miles">Miles&nbsp; of ZIP</span><b class="field w2">03635</b><a class="green-btn"><svg width="16" height="20" fill="none" stroke="#fff"><circle cx="7" cy="7" r="5.500" stroke-width="2"/><path d="M9.500 12L12.500 17" stroke-width="3" stroke-linecap="round"/></svg></a></div></section>
        </div>
      </aside>
    </div>
  </div>
</main>

<footer class="footer">
  <svg class="map-layer dark" width="1600" height="403" aria-hidden="true"><g transform="translate(0 7)"><use href="#map"/></g></svg>
  <div class="wrap">
    <div class="partners">
      <div class="partner p1"><svg class="card" width="114" height="85" viewBox="0 0 114 85"><circle cx="24" cy="42" r="10" fill="url(#gGlobe)"/><path d="M13 40Q24 44 35 33M16 47Q28 49 36 40" stroke="#fff" stroke-width="1.600" fill="none"/><text x="37" y="47" class="ka" font-size="14" font-weight="700" fill="#6a2c8e" textLength="62" lengthAdjust="spacingAndGlyphs">ჯეოსელი</text></svg>
        <div class="partner-text"><h4>Geocell</h4><p>Lorem ipsum dolor sit amet,<br>consectetur adipiscing elit.<br>Suspendisse vel elit id justo<br>aliquet pellentesque gravida sit</p></div></div>
      <div class="partner p2"><svg class="card" width="114" height="85" viewBox="0 0 114 85"><rect x="14.500" y="30.500" width="25" height="23" rx="2" fill="#ffd400" stroke="#35b44a"/><path d="M16 47Q24 46 25 38Q26 33 33 32Q27 36 29 47H25ZM33 32Q34 42 38 47H29Q27 36 33 32Z" fill="#fff"/><path d="M15 47H39V53H15Z" fill="#1da64a"/><text x="17" y="52" class="ka" font-size="5" font-weight="700" fill="#ffd400" textLength="20" lengthAdjust="spacingAndGlyphs">ვისოლი</text><text x="45" y="39" class="ka" font-size="11" font-weight="700" fill="#0fa74d" textLength="57" lengthAdjust="spacingAndGlyphs">ვისოლი</text><text x="45" y="52" font-size="10" font-weight="700" fill="#0fa74d" textLength="57" lengthAdjust="spacingAndGlyphs" font-family="DejaVu Sans, sans-serif">WISSOL</text></svg>
        <div class="partner-text"><h4>Wissol</h4><p>System a tempus venenatis, magna<br>elit rutrum libero, a consectetur<br>tortor...</p></div></div>
      <div class="partner p3"><svg class="card" width="114" height="85" viewBox="0 0 114 85"><rect x="36.500" y="14.800" width="45" height="45" rx="4" fill="none" stroke="#a9a9a9" stroke-width="1.400"/><path d="M39 36Q38 32 44 32Q54 34 60 29Q68 26 69 22Q76 18 81 24Q85 30 79 33Q75 34 75 40L73 49L76 52H66L64 44L58 42Q53 44 54 48L57 52H48L46 42Q43 44 42 50L38 52H35L39 47Z" fill="#ee7c20"/><g fill="none" stroke="#fff" stroke-width=".9"><path d="M62 30Q66 38 72 38M66 28Q70 34 76 33M60 36Q66 42 74 43M65 46L73 48M72 23Q72 29 78 30M44 37Q50 36 56 39" stroke-dasharray="2 1"/></g><text x="36" y="65" class="ka" font-size="4" fill="#e0955a" textLength="46" lengthAdjust="spacingAndGlyphs">საქართველოს ბანკი</text><text x="36" y="70" font-size="4" font-weight="700" fill="#e0853a" textLength="46" lengthAdjust="spacingAndGlyphs">BANK OF GEORGIA</text></svg>
        <div class="partner-text"><h4>Bank of Georgia</h4><p>Lorem ipsum dolor sit amet, pellen-<br>tesque gravida sit amet augue.<br><b>Proin faucibus</b> ..</p></div></div>
    </div>
    <div class="banners"><div class="b1">BANNER</div><div class="b2">BANNER</div><div class="b3">BANNER</div><div class="b4">BANNER</div></div>
    <div class="foot-nav-row">
      <svg class="foot-brand" width="124" height="71" fill="#161616" aria-hidden="true"><use href="#wordmark"/></svg>
      <nav class="foot-nav"><a>CATALOGUE</a><i></i><a>REVIEWS</a><i></i><a>NEWS</a><i></i><a>CONTACT</a></nav>
    </div>
  </div>
  <div class="bottom"><div class="wrap bottom-row"><span>© 2011 REVIO. All Rights Reserved</span><span class="by">Designed By <svg width="50" height="14"><text x="0" y="11" class="studio" textLength="50" lengthAdjust="spacingAndGlyphs">moxeue</text></svg></span></div></div>
</footer>
</body>
</html>
```
FILE: styles.css
```css
* { box-sizing: border-box; }
body { margin: 0; width: 1600px; font-family: "Liberation Sans", Arial, sans-serif; font-size: 12px; color: #666; background: #1a1a1a; }
h2, h3, h4, p, ul { margin: 0; padding: 0; list-style: none; }
em, i { font-style: normal; }
svg { display: block; flex: none; }
.defs { position: absolute; }
.ka { font-family: "DejaVu Sans", sans-serif; }
.wrap { width: 960px; margin: 0 auto; position: relative; }

.top-line { height: 8px; background: #414244; }
.page { position: relative; height: 1783px; overflow: hidden;
  background: radial-gradient(ellipse 900px 420px at 50% 60px, #cae677 0, rgba(202,230,119,0) 100%), radial-gradient(ellipse 700px 300px at 50% 100%, #c4e164, rgba(196,225,100,0)), #bfe05a; border-top: 1px solid #cfe98a; }
.map-layer { position: absolute; left: 0; }
.map-layer.green { top: -9px; color: #536a10; }
.map-layer.dark { top: 0; color: #000; opacity: .9; }
.map-labels { font: 10px "Liberation Sans", Arial, sans-serif; }
.map-labels .ka { font: 9.5px "DejaVu Sans", sans-serif; }
.wordmark { font-family: "Open Sans", sans-serif; font-weight: 700; }
.soft { filter: blur(1px); }

.header { display: flex; justify-content: space-between; height: 120px; padding-top: 17px; }
.brand { overflow: visible; }
.header-side { display: flex; flex-direction: column; align-items: flex-end; padding-top: 2px; }
.account { display: flex; gap: 11px; }
.lang { width: 72px; height: 28px; border: 1px solid #a5c050; background: linear-gradient(#fff, #ececec); color: #222; font-size: 10px; line-height: 26px; text-align: center; }
.signin { display: flex; width: 110px; height: 28px; border: 1px solid #161616; background: linear-gradient(#3c3c3c, #232323); color: #fff; font-weight: 700; font-size: 14px; line-height: 26px; }
.signin span { width: 81px; padding-left: 15px; }
.signin-caret { flex: 1; border-left: 1px solid #454545; display: flex; align-items: center; justify-content: center; }
.signin-caret::after { content: ""; border: 4px solid transparent; border-top-color: #fff; border-bottom: 0; }
.nav { display: flex; gap: 45px; margin: 27px -1px 0 0; color: #fff; font-size: 18px; font-weight: 700; line-height: 20px; text-shadow: 0 1px 2px rgba(70,100,0,.5); }

.search { display: flex; height: 71px; padding: 10px; background: rgba(0,0,0,.16); }
.search-input { position: relative; display: flex; justify-content: space-between; width: 882px; padding: 15px 25px 0 14px; background: #fff; font-size: 20px; font-weight: 700; line-height: 23px; color: #666; }
.search-input::after { content: ""; position: absolute; left: 100%; top: 15px; border: 7px solid transparent; border-left: 6px solid #fff; border-right: 0; }
.caret { display: block; width: 0; height: 0; border: 5px solid transparent; border-top-color: #b5b5b5; border-bottom: 0; }
.search-input .caret { margin-top: 10px; }
.search-icon { margin: 10px 0 0 16px; }
.count { height: 42px; padding-top: 9px; font-size: 11px; line-height: 14px; color: #fff; }

.panel { position: relative; display: flex; height: 1475px; background: #fff; box-shadow: 0 1px 1px #8aa03e; }
.panel::before, .panel::after { content: ""; position: absolute; top: 40px; width: 10px; height: 1330px; background: linear-gradient(rgba(90,110,30,0), rgba(90,110,30,.36) 22%, rgba(90,110,30,.36) 65%, rgba(90,110,30,0)); }
.panel::before { right: 100%; }
.panel::after { left: 100%; }
.results { width: 629px; padding: 17px 20px 0 8px; }
.ribbon { position: relative; display: flex; justify-content: space-between; height: 25px; border-bottom: 1px solid #e9e9e9; font-size: 10px; line-height: 23px; }
.ribbon b { width: 88px; height: 25px; padding-left: 9px; background: #ebebeb; border: 1px solid #e2e2e2; color: #6e6e6e; }
.ribbon span { color: #8ccfe6; font-weight: 700; }
.ribbon::after { content: ""; position: absolute; left: 2px; top: 25px; border-top: 3px solid #d2d2d2; border-left: 7px solid transparent; }
.ribbon, .entry { width: 601px; }
.entry { display: flex; justify-content: space-between; width: 592px; height: 135px; margin-left: 9px; border-bottom: 1px solid #e4e4e4; }
.entry.first { height: 130px; padding-top: 1px; border: 0; }
.entry.second { height: 130px; }
.entry.second .info { padding-top: 13px; }
.entry.second .thumb { margin-top: 15px; }
.entry.last { height: 144px; }
.info { padding-top: 18px; }
.info h2 { font-size: 18px; line-height: 20px; color: #424242; margin-left: -1px; white-space: nowrap; }
.ad h2 { color: #53a5c2; }
.ad.first h2 { margin-left: 0; }
.rate { display: flex; gap: 9px; margin: 6px 0 0 -2px; height: 17px; color: #5e5e5e; font-size: 13px; line-height: 17px; }
.addr { margin-top: 10px; line-height: 14px; color: #929292; }
.addr em { color: #4c4c4c; }
.links { display: flex; margin-top: 11px; font-size: 14px; font-weight: 700; line-height: 16px; color: #a1ba4b; }
.links > svg { margin: 2px 7px 0 0; }
.links .ln { margin: 6px 6px 0 14px; }
.links .det { padding-top: 1px; }
.thumb { position: relative; width: 151px; height: 94px; margin-top: 20px; border: 1px solid #e2e2e2; background: #fff; }
.low .thumb { margin-top: 24px; }
.thumb::before { content: ""; position: absolute; left: -7px; top: 39px; width: 13px; height: 13px; background: #fff; border: solid #e2e2e2; border-width: 0 0 1px 1px; transform: rotate(45deg); }
.thumb svg { position: relative; width: 149px; height: 92px; }

.pager { display: flex; gap: 8px; margin: 17px 0 0 9px; width: 597px; font-weight: 700; color: #606060; }
.pager a { display: flex; align-items: center; justify-content: center; width: 29px; height: 26px; border: 1px solid #d3d3d3; background: linear-gradient(#f3f3f3, #e4e4e4); box-shadow: inset 0 1px #fff; }
.pager .on { border-color: #c5da66; background: linear-gradient(#d5f366, #c6df63); box-shadow: none; color: #fff; text-shadow: 0 1px 1px #8da040; }
.pager .dots { width: 14px; padding: 7px 0 0 2px; line-height: 14px; }
.tri { border: 4px solid transparent; border-left-color: #555; border-right: 0; }
.pager .wide { width: 61px; gap: 7px; }
.pager .pages { margin-left: auto; padding-top: 7px; line-height: 14px; white-space: nowrap; }

.side { width: 314px; padding-top: 17px; }
.bar { width: 306px; height: 39px; padding-left: 14px; background: linear-gradient(#d8d8d8, #d2d2d2); border: 1px solid #cbcbcb; box-shadow: inset 0 0 0 1px #dadada; font-size: 14px; line-height: 37px; color: #6f6f6f; text-shadow: 0 1px #f4f4f4; }
.ads-bar { margin-left: 1px; position: relative; box-shadow: inset 0 0 0 1px #dadada, 7px 7px 0 #f7f7f7, 4px 7px 0 #f7f7f7; }
.ads { padding: 18px 0 0 1px; }
.promo { display: flex; height: 83px; background: linear-gradient(#e6e6e6, #e6e6e6) 1px 71px / 312px 1px no-repeat; }
.promo:last-child { background: none; height: 85px; }
.pic { width: 96px; height: 60px; border: 1px solid #e0e0e0; }
.pic svg { width: 94px; height: 58px; }
.promo-text { padding-left: 10px; }
.promo h4 { font-size: 14px; line-height: 16px; margin-top: -2px; color: #424242; }
.promo h4.blue { color: #53a5c2; }
.promo p { margin-top: 4px; font-size: 11px; line-height: 15px; color: #8c8c8c; white-space: nowrap; }
.promo p.drop { margin-top: 5px; }

.filters { border: 1px solid #e9e9e9; background: #f9f9f9; width: 314px; }
.filter { background: linear-gradient(#e9e9e9 0 1px, #f1f1f1 1px 41px, #fff 41px 42px, #f9f9f9 42px) no-repeat 0 5px; }
.filter .bar { margin-left: -1px; position: relative; }
.sort { height: 134px; margin-top: -6px; }
.area { height: 152px; }
.rating { height: 183px; }
.price { height: 102px; }
.distance { height: 105px; }
.checks { padding: 18px 0 0 14px; }
.rating .checks { padding-top: 22px; }
.checks li { display: flex; height: 12px; margin-bottom: 12px; gap: 7px; font-size: 13px; font-weight: 700; line-height: 13px; color: #999; }
.checks li::before { content: ""; width: 12px; height: 12px; border: 1px solid #cfcfcf; background: linear-gradient(90deg, #f4f4f4, #e8e8e8); }
.checks .on { color: #5e5e5e; }
.checks .on::before { content: "✓"; color: #fff; background: #cbe65f; border-color: #b5d04f; font: 700 10px/10px "DejaVu Sans", sans-serif; text-align: center; }
.checks .tight { margin-top: -2px; }
.places { padding: 21px 0 0 14px; }
.places li { display: flex; align-items: center; height: 12px; margin-bottom: 13px; font-size: 13px; font-weight: 700; line-height: 12px; color: #999; }
.places li::before { content: ""; width: 7px; height: 7px; margin-right: 11px; border-radius: 50%; background: #c4c4c4; }
.minus { width: 12px; height: 12px; margin-left: 5px; border: 1px solid #c9c9c9; background: linear-gradient(#888, #888) center / 6px 2px no-repeat #fff; }
.adder { display: flex; gap: 8px; padding-left: 14px; }
.select { display: flex; width: 243px; height: 31px; border: 1px solid #dcdcdc; background: #fff; font-size: 13px; font-weight: 700; line-height: 29px; color: #999; }
.select span { flex: 1; padding-left: 9px; }
.select b { width: 33px; border-left: 1px solid #d8d8d8; background: linear-gradient(#f2f2f2, #e6e6e6); display: flex; align-items: center; justify-content: center; }
.green-btn { display: flex; align-items: center; justify-content: center; width: 33px; height: 31px; background: linear-gradient(#d3f163, #c6e06a); border: 1px solid #cbe263; }
.slider { margin: 17px 0 0 13px; }
.scale { display: grid; grid-template-columns: 80px 59px 62px 59px 24px; margin: 4px 0 0 13px; font-weight: 700; line-height: 14px; color: #666; }
.zip { display: flex; padding: 19px 0 0 13px; font-weight: 700; line-height: 33px; color: #999; white-space: nowrap; }
.field { height: 31px; border: 1px solid #dcdcdc; background: #fff; text-align: center; font-size: 13px; line-height: 29px; }
.w1 { width: 52px; margin: 0 7px; }
.w2 { width: 63px; margin: 0 7px 0 8px; }

.footer { position: relative; border-top: 8px solid #404442; background: #262626; }
.partners { display: grid; grid-template-columns: 325px 332px 303px; padding-top: 41px; height: 126px; }
.partner { display: flex; height: 85px; }
.card { background: #fff; }
.p1, .p2 { background: linear-gradient(#1a1a1a, #1a1a1a) 305px 0 / 1px 85px no-repeat, linear-gradient(#303030, #303030) 306px 0 / 1px 85px no-repeat; }
.p2 { background-position: 312px 0, 313px 0; }
.partner-text { padding-left: 12px; }
.partner h4 { font-size: 14px; line-height: 16px; margin-top: -2px; color: #bcbcbc; }
.partner p { padding-left: 1px; margin-top: 5px; font-size: 11px; line-height: 16px; color: #8f8f8f; white-space: nowrap; }
.banners { display: grid; grid-template-columns: repeat(4, 228px); gap: 16px; margin-top: 35px; }
.banners div { height: 105px; border: 1px solid #4a4a4a; background: rgba(255,255,255,.1); color: #cacaca; font-size: 22px; font-weight: 700; line-height: 103px; text-align: center; text-shadow: 0 2px 1px #000; }
.banners .b1 { padding-right: 2px; }
.banners .b2 { padding-right: 4px; }
.banners .b3 { padding-left: 4px; }
.banners .b4 { padding-left: 6px; }
.foot-nav-row { display: flex; justify-content: space-between; height: 105px; margin-top: 32px; border-top: 1px solid #181818; box-shadow: inset 0 1px #333; }
.foot-brand { margin-top: 33px; }
.foot-nav { display: flex; align-items: center; height: 12px; margin-top: 84px; color: #fff; font-size: 10px; font-weight: 700; line-height: 12px; }
.foot-nav i { width: 1px; height: 7px; margin: -1px 18px 0 14px; background: #fff; }
.foot-nav i:first-of-type { margin-left: 15px; }
.bottom { position: relative; height: 66px; background: #1a1a1a; }
.bottom-row { display: flex; justify-content: space-between; padding-top: 16px; font-size: 11px; font-weight: 700; line-height: 14px; color: #9a9a9a; }
.by { display: flex; gap: 5px; color: #8c8c8c; }
.studio { font: 700 14px "Open Sans", sans-serif; fill: #fff; }
```
